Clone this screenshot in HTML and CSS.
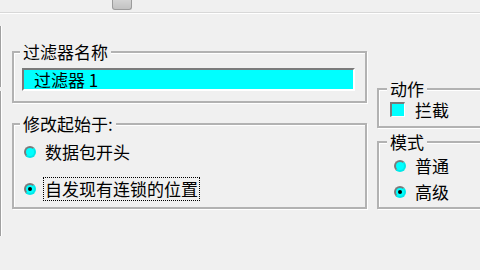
FILE: index.html
```html
<!DOCTYPE html>
<html lang="zh-CN">
<head>
<meta charset="utf-8">
<link rel="stylesheet" href="styles.css">
</head>
<body>
<div class="topbar"><div class="thumb"></div></div>
<div class="main">
  <div class="edge"><div class="seg seg1"></div><div class="seg seg2"></div></div>
  <div class="col-left">
    <fieldset class="grp g-name">
      <legend>过滤器名称</legend>
      <div class="field">过滤器 1</div>
    </fieldset>
    <fieldset class="grp g-start">
      <legend>修改起始于:</legend>
      <div class="row"><span class="radio"></span><span class="lbl">数据包开头</span></div>
      <div class="row"><span class="radio on"></span><span class="lbl focus">自发现有连锁的位置</span></div>
    </fieldset>
  </div>
  <div class="col-right">
    <fieldset class="grp g-action">
      <legend>动作</legend>
      <div class="row r-check"><span class="check"></span><span class="lbl">拦截</span></div>
    </fieldset>
    <fieldset class="grp g-mode">
      <legend>模式</legend>
      <div class="row r-mode"><span class="radio"></span><span class="lbl">普通</span></div>
      <div class="row r-mode"><span class="radio on"></span><span class="lbl">高级</span></div>
    </fieldset>
  </div>
</div>
</body>
</html>
```

FILE: styles.css
```css
html, body {
  margin: 0;
  padding: 0;
  width: 480px;
  height: 270px;
  overflow: hidden;
  background: #f0f0f0;
  font-family: "Noto Sans CJK SC", "Noto Sans", sans-serif;
  font-size: 17px;
  line-height: 20px;
  color: #000;
}

.topbar {
  height: 12px;
  border-bottom: 1px solid #d8d8d8;
  box-shadow: 0 1px 0 #ffffff;
  padding-left: 112px;
  box-sizing: content-box;
}
.thumb {
  width: 18px;
  height: 9px;
  margin-top: 0;
  border: 1px solid #9c9c9c;
  border-top: none;
  border-radius: 0 0 3px 3px;
  background: linear-gradient(#d4d4d4, #c2c2c2);
}

.main {
  display: flex;
  align-items: flex-start;
  width: 480px;
  height: 256px;
  overflow: hidden;
}

.edge {
  flex: none;
  display: flex;
  flex-direction: column;
  gap: 4px;
  margin-top: 13px;
  width: 2px;
}
.seg {
  width: 1px;
  border-right: 1px solid #ffffff;
  background: #a0a0a0;
}
.seg1 { height: 61px; }
.seg2 { height: 145px; }

.col-left {
  flex: none;
  width: 355px;
  margin-left: 10px;
  padding-top: 29px;
  display: flex;
  flex-direction: column;
  gap: 11px;
}
.col-right {
  flex: none;
  width: 140px;
  margin-left: 10px;
  padding-top: 66px;
  display: flex;
  flex-direction: column;
  gap: 4px;
}

.grp {
  margin: 0;
  border: 2px solid #b2b2b2;
  box-shadow: inset 1px 1px 0 #ffffff, 1px 1px 0 #ffffff;
  min-width: 0;
}
.grp legend {
  padding: 0 3px;
  margin-left: -2px;
  background: #f0f0f0;
  line-height: 20px;
}

.g-name { padding: 6px 10px 10px 8px; }
.g-start { padding: 6px 10px 6px 8px; }
.g-action { padding: 0 0 6px 10px; }
.g-mode { padding: 3px 0 4px 10px; }

.field {
  height: 19px;
  line-height: 19px;
  padding-left: 10px;
  background: #00ffff;
  border-top: 2px solid #7a7a7a;
  border-left: 2px solid #7a7a7a;
  border-bottom: 2px solid #ffffff;
  border-right: 2px solid #ffffff;
}

.row {
  display: flex;
  align-items: center;
  height: 24px;
}
.g-start .row + .row { margin-top: 13px; }

.r-check { height: 21px; }
.r-mode { height: 22px; }
.r-mode + .r-mode { margin-top: 4px; }

.radio {
  box-sizing: border-box;
  width: 12px;
  height: 12px;
  margin-left: 2px;
  border-radius: 50%;
  background: #00ffff;
  border: 2px solid;
  border-color: #7a7a7a #00e8e8 #00e8e8 #7a7a7a;
  display: flex;
  align-items: center;
  justify-content: center;
  flex: none;
}
.radio.on::after {
  content: "";
  width: 4px;
  height: 4px;
  border-radius: 50%;
  background: #000;
}
.g-mode .radio { margin-left: 5px; }

.check {
  box-sizing: border-box;
  width: 15px;
  height: 15px;
  margin-left: 1px;
  background: #00ffff;
  border-top: 2px solid #7a7a7a;
  border-left: 2px solid #7a7a7a;
  border-bottom: 1px solid #ffffff;
  border-right: 1px solid #ffffff;
  flex: none;
}

.lbl {
  margin-left: 9px;
  white-space: nowrap;
}
.r-check .lbl { margin-left: 10px; }
.lbl.focus {
  margin-left: 7px;
  padding: 1px 1px;
  border: 1px dotted #000;
  line-height: 20px;
}
```
